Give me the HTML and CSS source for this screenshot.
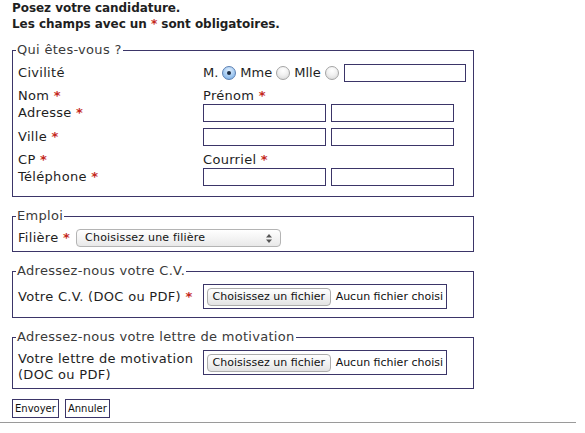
FILE: index.html
```html
<!DOCTYPE html>
<html lang="fr">
<head>
<meta charset="utf-8">
<title>Candidature</title>
<link rel="stylesheet" href="styles.css">
</head>
<body>
<div class="page">
  <div class="intro">
    <p>Posez votre candidature.</p>
    <p>Les champs avec un <span class="req">*</span> sont obligatoires.</p>
  </div>
  <form class="form">
    <fieldset class="box box-who">
      <legend>Qui êtes-vous ?</legend>
      <div class="row row-civ">
        <span class="lab">Civilité</span>
        <div class="civ">
          <label class="radio">M. <input type="radio" name="civ" checked></label>
          <label class="radio">Mme <input type="radio" name="civ"></label>
          <label class="radio">Mlle <input type="radio" name="civ"></label>
          <input type="text" class="txt txt-civ">
        </div>
      </div>
      <div class="row row-text row-b">
        <span class="lab">Nom <span class="req">*</span></span>
        <span class="lab">Prénom <span class="req">*</span></span>
      </div>
      <div class="row row-in">
        <span class="lab">Adresse <span class="req">*</span></span>
        <div class="pair"><input type="text" class="txt"><input type="text" class="txt"></div>
      </div>
      <div class="row row-in row-d">
        <span class="lab">Ville <span class="req">*</span></span>
        <div class="pair"><input type="text" class="txt"><input type="text" class="txt"></div>
      </div>
      <div class="row row-text row-e">
        <span class="lab">CP <span class="req">*</span></span>
        <span class="lab">Courriel <span class="req">*</span></span>
      </div>
      <div class="row row-in">
        <span class="lab">Téléphone <span class="req">*</span></span>
        <div class="pair"><input type="text" class="txt"><input type="text" class="txt"></div>
      </div>
    </fieldset>

    <fieldset class="box box-job">
      <legend>Emploi</legend>
      <div class="inline">
        <span class="lab">Filière <span class="req">*</span></span>
        <span class="select-wrap">
          <select class="select"><option>Choisissez une filière</option></select>
          <svg class="arrows" width="6" height="9" viewBox="0 0 6 9"><path d="M0 3.5 L3 0 L6 3.5 Z M0 5.5 L3 9 L6 5.5 Z" fill="#555"/></svg>
        </span>
      </div>
    </fieldset>

    <fieldset class="box box-cv">
      <legend>Adressez-nous votre C.V.</legend>
      <div class="row row-file">
        <span class="lab">Votre C.V. (DOC ou PDF) <span class="req">*</span></span>
        <div class="file"><span class="file-btn">Choisissez un fichier</span><span class="file-name">Aucun fichier choisi</span></div>
      </div>
    </fieldset>

    <fieldset class="box box-letter">
      <legend>Adressez-nous votre lettre de motivation</legend>
      <div class="row row-file2">
        <span class="lab lab-wrap">Votre lettre de motivation (DOC ou PDF)</span>
        <div class="file"><span class="file-btn">Choisissez un fichier</span><span class="file-name">Aucun fichier choisi</span></div>
      </div>
    </fieldset>

    <div class="actions">
      <button type="submit" class="btn">Envoyer</button>
      <button type="reset" class="btn">Annuler</button>
    </div>
  </form>
  <div class="rule"></div>
</div>
</body>
</html>
```

FILE: styles.css
```css
* { box-sizing: border-box; }
html, body { margin: 0; padding: 0; background: #fff; }
body {
  font-family: "DejaVu Sans", Verdana, sans-serif;
  font-size: 13px;
  line-height: 16px;
  letter-spacing: 0.3px;
  color: #1e1e1e;
}
.page { width: 576px; }
.intro {
  padding: 0 12px;
  font-weight: bold;
  font-size: 12px;
  letter-spacing: -0.05px;
  color: #1f1f1f;
}
.intro p { margin: 0; }
.req { color: #c4281c; font-weight: bold; }
.form { padding: 0 0 0 12px; }

.box {
  margin: 11px 0 0 0;
  width: 462px;
  border: 1px solid #3b3568;
  padding: 5px 5px 5px 5px;
  min-width: 0;
}
.box:first-child { margin-top: 10px; }
.box legend {
  padding: 0 1px;
  margin-left: -2px;
  color: #3a3a3a;
  line-height: 16px;
}
.box-who { padding-bottom: 10px; }
.box-job { padding-bottom: 4px; }
.box-cv { padding-bottom: 8px; }

.row { display: grid; grid-template-columns: 185px 1fr; align-items: center; }
.row-civ { height: 19px; }
.row-text { height: 16px; }
.row-b { margin-top: 6px; }
.row-in { height: 18px; }
.row-d { margin: 6px 0 6px; }
.lab { white-space: nowrap; }
.lab-wrap { white-space: normal; width: 185px; }

.civ { display: flex; align-items: center; gap: 4px; letter-spacing: 0; }
.radio { display: inline-flex; align-items: center; gap: 4px; }
.radio input {
  appearance: none;
  -webkit-appearance: none;
  margin: 0;
  width: 14px; height: 14px;
  border-radius: 50%;
  border: 1px solid #a4a4a4;
  background: radial-gradient(circle at 50% 30%, #ffffff 0%, #f1f1f1 45%, #d3d3d3 100%);
  position: relative;
}
.radio input:checked {
  border-color: #5b7fb2;
  background: radial-gradient(circle at 50% 30%, #dfeefd 0%, #a9cdf2 50%, #6fa6e0 100%);
}
.radio input:checked::after {
  content: "";
  position: absolute;
  left: 4px; top: 4px;
  width: 4px; height: 4px;
  border-radius: 50%;
  background: #1c2c44;
}
.txt {
  margin: 0;
  height: 18px;
  border: 1px solid #3b3568;
  background: #fff;
  padding: 0 2px;
  font: inherit;
  outline: none;
}
.txt-civ { width: 122px; margin-left: 1px; }
.pair { display: flex; gap: 5px; }
.pair .txt { width: 123px; }

.inline { display: flex; align-items: center; gap: 6px; height: 18px; }
.select-wrap { position: relative; display: inline-block; }
.select {
  appearance: none;
  -webkit-appearance: none;
  margin: 0;
  width: 205px;
  height: 18px;
  border: 1px solid #b4b4b4;
  border-radius: 4px;
  background: linear-gradient(#ffffff, #f4f4f4 50%, #e8e8e8);
  font-family: "DejaVu Sans", sans-serif;
  font-size: 11px;
  letter-spacing: 0.2px;
  color: #111;
  padding: 0 0 0 8px;
  line-height: 16px;
}
.arrows { position: absolute; right: 9px; top: 5px; }

.row-file { height: 25px; }
.row-file2 { align-items: start; }
.row-file2 .lab { padding-top: 1px; }
.file {
  display: flex;
  align-items: center;
  width: 244px;
  height: 25px;
  border: 1px solid #3b3568;
  padding: 0 3px;
  gap: 5px;
  font-size: 11px;
  line-height: 14px;
  letter-spacing: 0;
}
.file-btn {
  display: inline-block;
  height: 18px;
  width: 125px;
  border: 1px solid #acacac;
  border-radius: 4px;
  background: linear-gradient(#ffffff, #f2f2f2 50%, #e3e3e3);
  text-align: center;
  line-height: 16px;
  color: #111;
  white-space: nowrap;
}
.file-name { white-space: nowrap; color: #111; }

.actions { display: flex; gap: 6px; margin-top: 10px; }
.btn {
  margin: 0;
  height: 19px;
  padding: 0 2px;
  border: 1px solid #3b3568;
  background: #fff;
  font-family: "DejaVu Sans", sans-serif;
  font-size: 10px;
  color: #111;
  line-height: 16px;
}
.rule { margin-top: 4px; height: 1px; background: #9a9a9a; width: 576px; }
```
